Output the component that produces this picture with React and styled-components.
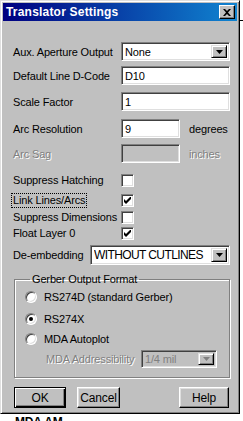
import React from 'react';
import styled, { createGlobalStyle } from 'styled-components';

const Global = createGlobalStyle`
  html, body { margin: 0; padding: 0; background: #fff; }
  body { font-family: "Liberation Sans", Arial, sans-serif; font-size: 11px; color: #000; letter-spacing: -0.15px; }
`;

const Page = styled.div`
  width: 243px;
  height: 421px;
  overflow: hidden;
  background: #fff;
  position: relative;
`;

const Window = styled.div`
  width: 240px;
  height: 414px;
  box-sizing: border-box;
  background: #c0c0c0;
  border: 1px solid;
  border-color: #dfdfdf #000 #000 #dfdfdf;
  box-shadow: inset 1px 1px #fff, inset -1px -1px #808080;
  padding: 2px;
  display: flex;
  flex-direction: column;
`;

const TitleBar = styled.div`
  height: 18px;
  background: linear-gradient(to right, #000080, #1084d0);
  display: flex;
  align-items: center;
  justify-content: space-between;
  padding: 0 2px 0 3px;
`;

const Title = styled.span`
  color: #fff;
  font-weight: bold;
  font-size: 12px;
  letter-spacing: 0.2px;
`;

const CloseBtn = styled.div`
  width: 16px;
  height: 14px;
  box-sizing: border-box;
  background: #c0c0c0;
  border: 1px solid;
  border-color: #fff #000 #000 #fff;
  box-shadow: inset -1px -1px #808080;
  display: flex;
  align-items: center;
  justify-content: center;
`;

const Body = styled.div`
  flex: 1;
  padding: 21px 7px 0 9px;
  display: flex;
  flex-direction: column;
`;

const Row = styled.div`
  display: grid;
  grid-template-columns: ${p => p.$cols || '109px minmax(0, 1fr)'};
  align-items: center;
  height: ${p => p.$h || 19}px;
  margin-top: ${p => p.$mt || 0}px;
`;

const Label = styled.span`
  padding-left: 1px;
  white-space: nowrap;
  color: ${p => (p.$disabled ? '#808080' : '#000')};
  text-shadow: ${p => (p.$disabled ? '1px 1px 0 #fff' : 'none')};
`;

const FocusLabel = styled.span`
  justify-self: start;
  white-space: nowrap;
  padding: 0 1px;
  outline: 1px dotted #000;
  line-height: 13px;
`;

const Sunken = styled.div`
  box-sizing: border-box;
  height: ${p => p.$h || 19}px;
  width: ${p => (p.$w ? p.$w + 'px' : '100%')};
  min-width: 0;
  background: ${p => (p.$disabled ? '#c0c0c0' : '#fff')};
  border: 1px solid;
  border-color: #808080 #fff #fff #808080;
  box-shadow: inset 1px 1px #404040, inset -1px -1px #dfdfdf;
  display: flex;
  align-items: center;
  padding: 2px 2px 2px 3px;
  font-size: ${p => p.$fs || 11}px;
  letter-spacing: ${p => (p.$ls != null ? p.$ls : -0.15)}px;
  color: ${p => (p.$disabled ? '#808080' : '#000')};
`;

const ValueText = styled.span`
  flex: 1;
  min-width: 0;
  white-space: nowrap;
  overflow: hidden;
`;

const DropBtn = styled.div`
  width: 16px;
  flex: none;
  align-self: stretch;
  box-sizing: border-box;
  background: #c0c0c0;
  border: 1px solid;
  border-color: #dfdfdf #000 #000 #dfdfdf;
  box-shadow: inset 1px 1px #fff, inset -1px -1px #808080;
  display: flex;
  align-items: center;
  justify-content: center;
`;

const Unit = styled.span`
  margin-left: 9px;
  color: ${p => (p.$disabled ? '#808080' : '#000')};
  text-shadow: ${p => (p.$disabled ? '1px 1px 0 #fff' : 'none')};
`;

const Inline = styled.div`
  display: flex;
  align-items: center;
`;

const CheckBox = styled.div`
  width: 13px;
  height: 13px;
  box-sizing: border-box;
  background: #fff;
  border: 1px solid;
  border-color: #808080 #fff #fff #808080;
  box-shadow: inset 1px 1px #404040, inset -1px -1px #dfdfdf;
  display: flex;
  align-items: center;
  justify-content: center;
`;

const Group = styled.fieldset`
  margin: 8px 0 0 2px;
  width: 216px;
  box-sizing: border-box;
  height: 105px;
  border: 1px solid #808080;
  box-shadow: 1px 1px #fff, inset 1px 1px #fff;
  padding: 3px 0 0 10px;
  display: flex;
  flex-direction: column;
`;

const Legend = styled.legend`
  padding: 0 2px;
  margin-left: 5px;
  line-height: 13px;
`;

const RadioRow = styled.div`
  display: flex;
  align-items: center;
  gap: 7px;
  height: 16px;
  margin-top: ${p => p.$mt || 0}px;
`;

const Radio = styled.div`
  width: 12px;
  height: 12px;
  border-radius: 50%;
  box-sizing: border-box;
  background: #fff;
  border: 1px solid;
  border-color: #808080 #fff #fff #808080;
  box-shadow: inset 1px 1px #404040, inset -1px -1px #dfdfdf;
  display: flex;
  align-items: center;
  justify-content: center;
`;

const Dot = styled.div`
  width: 4px;
  height: 4px;
  border-radius: 50%;
  background: #000;
`;

const SubRow = styled.div`
  display: flex;
  align-items: center;
  justify-content: space-between;
  width: 192px;
  margin-top: 3px;
  padding-left: 20px;
  box-sizing: border-box;
`;

const Buttons = styled.div`
  display: flex;
  margin-top: 9px;
  padding-left: 2px;
`;

const Button = styled.div`
  width: ${p => p.$w}px;
  height: 21px;
  box-sizing: border-box;
  margin-left: ${p => p.$ml || 0}px;
  background: #c0c0c0;
  border: 1px solid;
  border-color: ${p => (p.$def ? '#000' : '#fff #000 #000 #fff')};
  box-shadow: ${p =>
    p.$def
      ? 'inset 1px 1px #fff, inset -1px -1px #000, inset -2px -2px #808080'
      : 'inset -1px -1px #808080, inset 1px 1px #dfdfdf'};
  display: flex;
  align-items: center;
  justify-content: center;
  font-size: 12px;
`;

const Below = styled.div`
  margin: 2px 0 0 15px;
  font-weight: bold;
  font-size: 12px;
  line-height: 12px;
  height: 5px;
  overflow: hidden;
`;

const Tick = styled.div`
  position: absolute;
  left: 240px;
  top: 20px;
  width: 3px;
  height: 1px;
  background: #000;
`;

const Arrow = ({ disabled }) => (
  <svg width="7" height="4" viewBox="0 0 7 4">
    <path d="M0 0h7L3.5 4z" fill={disabled ? '#808080' : '#000'} />
  </svg>
);

const Check = () => (
  <svg width="7" height="7" viewBox="0 0 7 7">
    <path d="M0 2v3l2 2 5-5V-1L2 4z" fill="#000" />
  </svg>
);

const Select = ({ value, fs, ls, w, disabled, h }) => (
  <Sunken $fs={fs} $ls={ls} $w={w} $disabled={disabled} $h={h}>
    <ValueText>{value}</ValueText>
    <DropBtn>
      <Arrow disabled={disabled} />
    </DropBtn>
  </Sunken>
);

const CheckRow = ({ label, checked, mt, focus }) => (
  <Row $h={14} $mt={mt}>
    {focus ? <FocusLabel>{label}</FocusLabel> : <Label>{label}</Label>}
    <CheckBox>{checked && <Check />}</CheckBox>
  </Row>
);

export default function App() {
  return (
    <Page>
      <Global />
      <Window>
        <TitleBar>
          <Title>Translator Settings</Title>
          <CloseBtn>
            <svg width="8" height="7" viewBox="0 0 8 7">
              <path d="M0 0h2l2 2 2-2h2L5 3.5 8 7H6L4 5 2 7H0l3-3.5z" fill="#000" />
            </svg>
          </CloseBtn>
        </TitleBar>
        <Body>
          <Row>
            <Label>Aux. Aperture Output</Label>
            <Select value="None" />
          </Row>
          <Row $mt={5}>
            <Label>Default Line D-Code</Label>
            <Sunken>D10</Sunken>
          </Row>
          <Row $mt={7}>
            <Label>Scale Factor</Label>
            <Sunken>1</Sunken>
          </Row>
          <Row $mt={8}>
            <Label>Arc Resolution</Label>
            <Inline>
              <Sunken $w={59}>9</Sunken>
              <Unit>degrees</Unit>
            </Inline>
          </Row>
          <Row $mt={6}>
            <Label $disabled>Arc Sag</Label>
            <Inline>
              <Sunken $w={59} $disabled />
              <Unit $disabled>inches</Unit>
            </Inline>
          </Row>
          <CheckRow label="Suppress Hatching" mt={10} />
          <CheckRow label="Link Lines/Arcs" checked focus mt={6} />
          <CheckRow label="Suppress Dimensions" mt={3} />
          <CheckRow label="Float Layer 0" checked mt={2} />
          <Row $cols="78px minmax(0, 1fr)" $h={20} $mt={5}>
            <Label>De-embedding</Label>
            <Select value="WITHOUT CUTLINES" fs={12} ls={-0.6} h={20} />
          </Row>
          <Group>
            <Legend>Gerber Output Format</Legend>
            <RadioRow>
              <Radio />
              <span>RS274D (standard Gerber)</span>
            </RadioRow>
            <RadioRow $mt={6}>
              <Radio>
                <Dot />
              </Radio>
              <span>RS274X</span>
            </RadioRow>
            <RadioRow $mt={4}>
              <Radio />
              <span>MDA Autoplot</span>
            </RadioRow>
            <SubRow>
              <Label $disabled>MDA Addressibility</Label>
              <Select value="1/4 mil" w={76} h={18} disabled />
            </SubRow>
          </Group>
          <Buttons>
            <Button $w={52} $def>OK</Button>
            <Button $w={43} $ml={11}>Cancel</Button>
            <Button $w={50} $ml={59}>Help</Button>
          </Buttons>
        </Body>
      </Window>
      <Below>MDA AM</Below>
      <Tick />
    </Page>
  );
}
